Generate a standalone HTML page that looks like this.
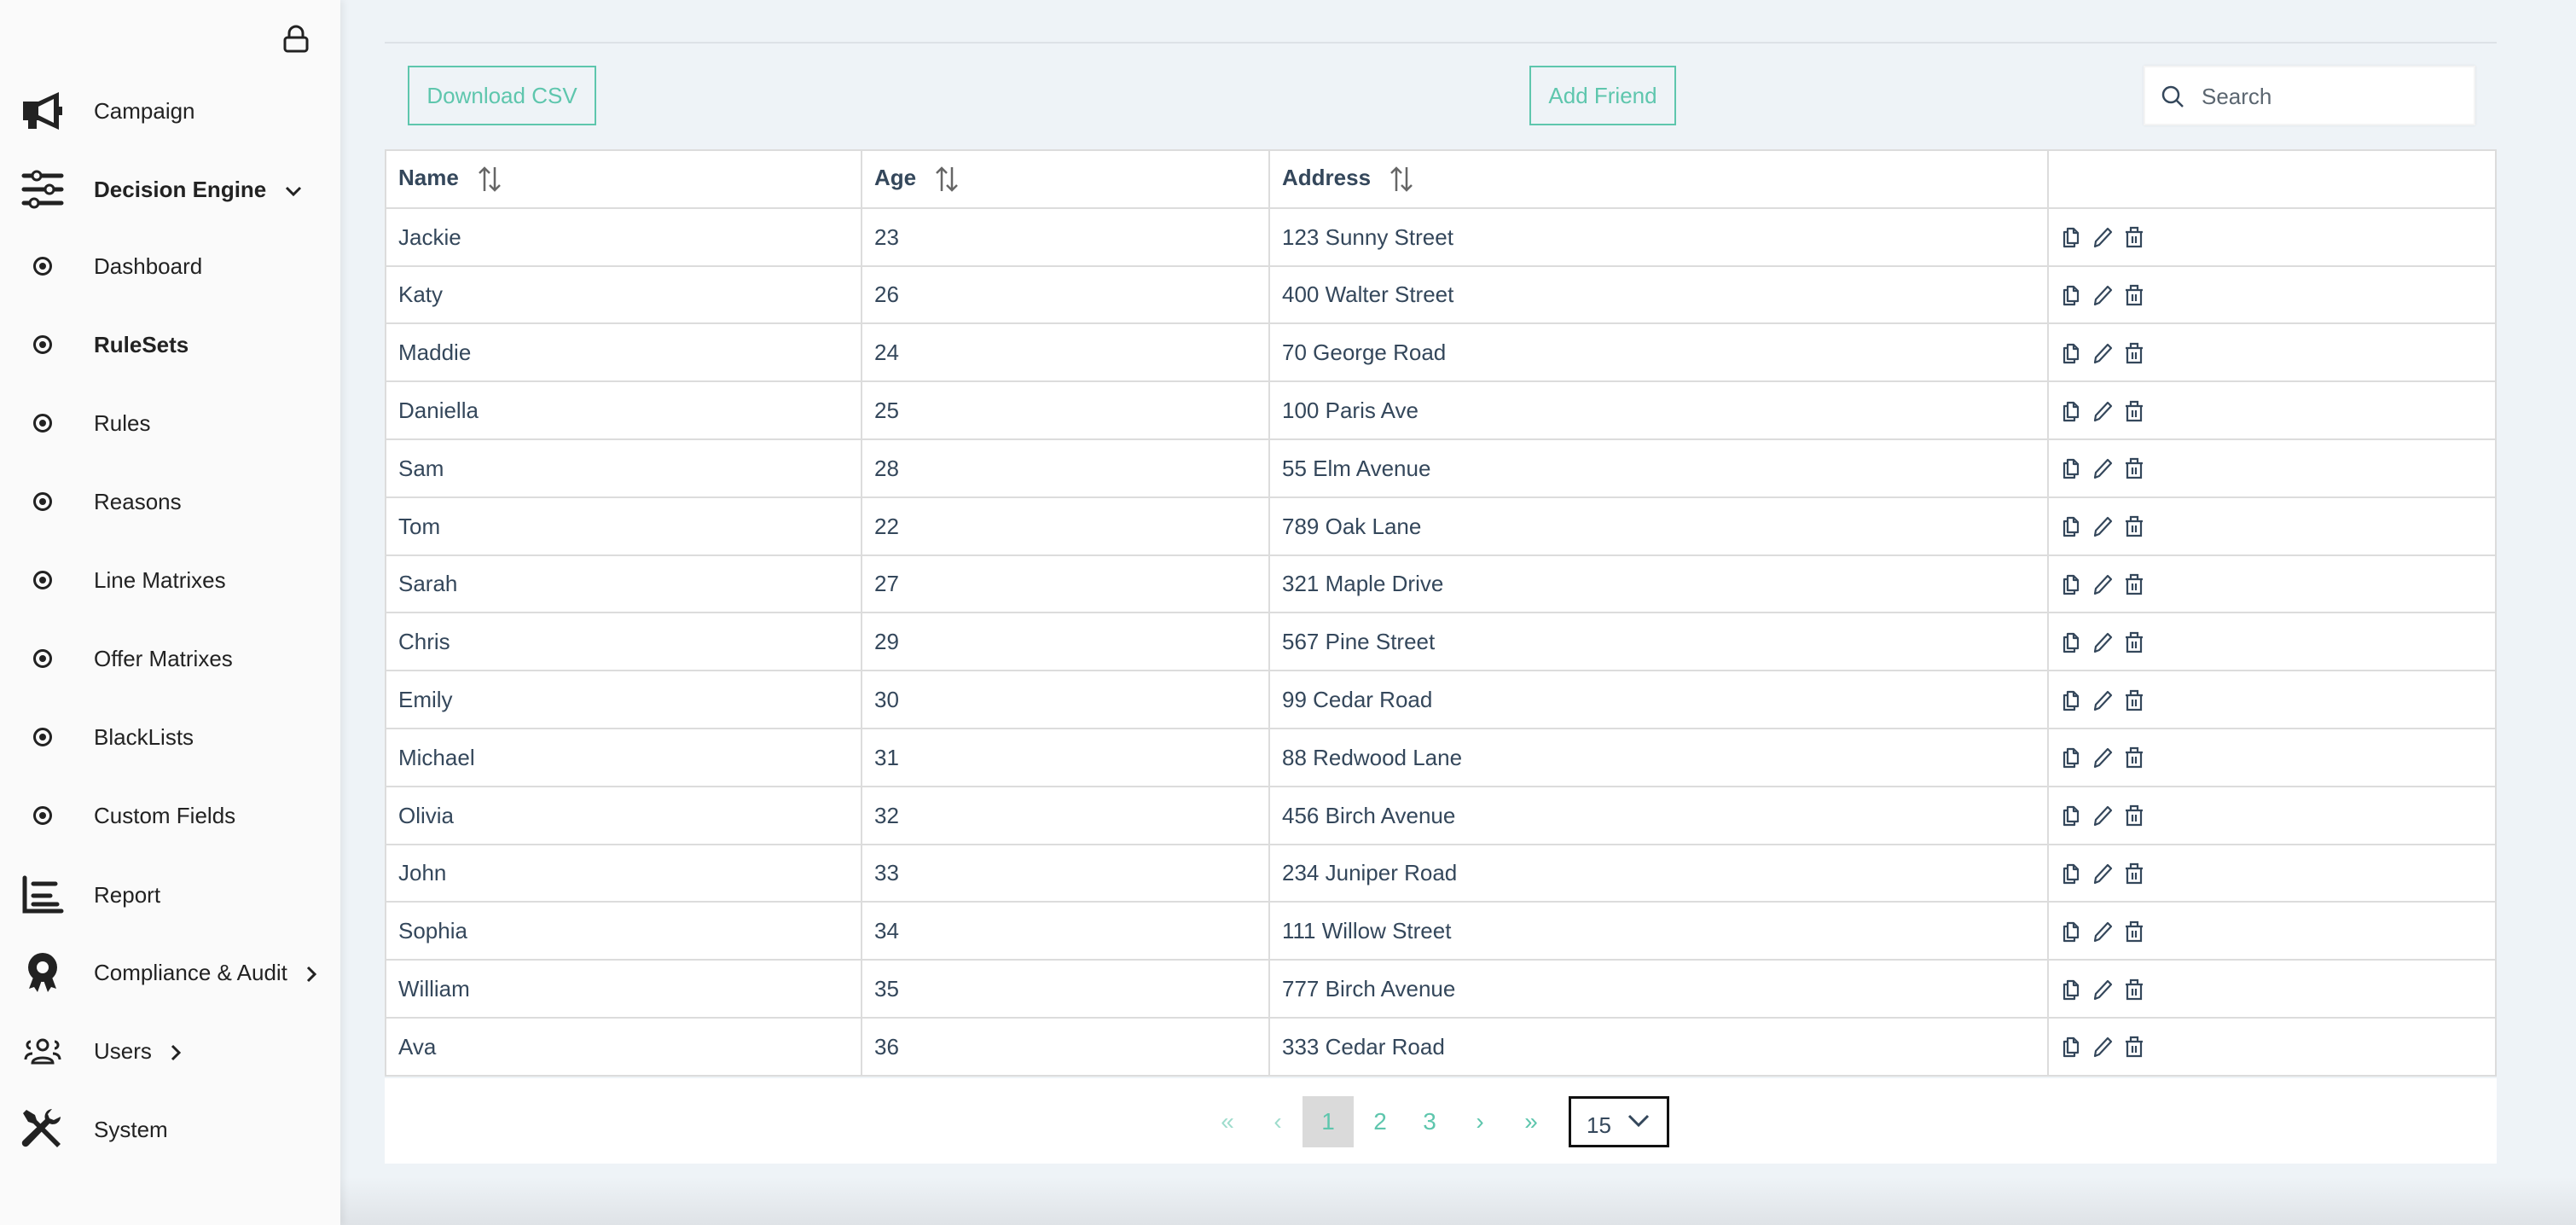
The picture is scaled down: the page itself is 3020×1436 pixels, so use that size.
<!DOCTYPE html>
<html><head><meta charset="utf-8"><style>
*{box-sizing:border-box;margin:0;padding:0}
body{width:3020px;height:1436px;overflow:hidden;font-family:"Liberation Sans",sans-serif;background:linear-gradient(#eef3f7 0,#eef3f7 1380px,#dfe3e7 1436px);position:relative}
.side{position:absolute;left:0;top:0;width:399px;height:1436px;background:#fafafa;box-shadow:4px 0 8px rgba(0,0,0,.06)}
.mi{position:absolute;left:0;height:60px;display:flex;align-items:center;font-size:26px;color:#222}
.mi .ic{position:absolute;left:22px;width:56px;height:56px;display:flex;align-items:center;justify-content:center}
.mi .tx{position:absolute;left:110px;white-space:nowrap}
.dot{width:22px;height:22px;border:3px solid #222;border-radius:50%;position:relative}
.dot:after{content:"";position:absolute;left:4px;top:4px;width:8px;height:8px;border-radius:50%;background:#222}
.topline{position:absolute;left:451px;top:49px;width:2476px;height:2px;background:#dde2e7}
.btn{position:absolute;top:77px;height:70px;border:2px solid #5ec6ad;color:#5ec6ad;font-size:26px;display:flex;align-items:center;justify-content:center}
.search{position:absolute;left:2513px;top:77px;width:389px;height:70px;background:#fff;border:2px solid #f4f4f4;box-shadow:0 0 3px rgba(0,0,0,.08)}
.search span{position:absolute;left:66px;top:19px;font-size:26px;color:#5b6670}
table{position:absolute;left:451px;top:175px;width:2476px;border-collapse:collapse;background:#fff;table-layout:fixed}
td,th{border:2px solid #dcdcdc;height:67.8px;padding:0 0 0 14px;font-size:26px;color:#34475b;text-align:left;font-weight:normal;line-height:1}
th{font-weight:bold}
.sort{display:inline-block;margin-left:22px;vertical-align:middle}
.acts svg{vertical-align:middle;margin-right:12px}
.pag{position:absolute;left:451px;top:1264px;width:2476px;height:100px;background:#fff}
.pg{position:absolute;top:21px;height:60px;width:60px;display:flex;align-items:center;justify-content:center;font-size:28px;color:#5ec6ad}
.sel{position:absolute;left:1388px;top:21px;width:118px;height:60px;border:3px solid #111;font-size:26px;color:#34475b}
</style></head><body>
<div class="side">
<svg style="position:absolute;left:332px;top:29px" width="30" height="33" viewBox="0 0 30 33"><path d="M7 15V10a8 8 0 0 1 16 0v5" fill="none" stroke="#222" stroke-width="3"/><rect x="2" y="15" width="26" height="16" rx="3" fill="none" stroke="#222" stroke-width="3"/></svg>

<div class="mi" style="top:100px"><div class="ic"><svg width="50" height="50" viewBox="0 0 50 50"><path d="M2 14h18L44 3v44L20 36h-2v10H8V36H2z" fill="#222"/><path d="M20 20l18-9v28L20 30z" fill="#fafafa"/><rect x="44" y="20" width="4" height="10" fill="#222"/></svg></div><div class="tx">Campaign</div></div>
<div class="mi" style="top:192px"><div class="ic"><svg width="50" height="46" viewBox="0 0 50 46"><g stroke="#222" stroke-width="5" stroke-linecap="round"><path d="M3 7h44M3 23h44M3 39h44"/></g><g fill="#fafafa" stroke="#222" stroke-width="3"><circle cx="18" cy="7" r="5"/><circle cx="33" cy="23" r="5"/><circle cx="15" cy="39" r="5"/></g></svg></div><div class="tx" style="font-weight:bold">Decision Engine <svg style="margin-left:14px;vertical-align:middle" width="20" height="14" viewBox="0 0 20 14"><path d="M2 3l8 8 8-8" fill="none" stroke="#222" stroke-width="3"/></svg></div></div>
<div class="mi" style="top:282px"><div class="ic"><div class="dot"></div></div><div class="tx">Dashboard</div></div>
<div class="mi" style="top:374px"><div class="ic"><div class="dot"></div></div><div class="tx" style="font-weight:bold">RuleSets</div></div>
<div class="mi" style="top:466px"><div class="ic"><div class="dot"></div></div><div class="tx">Rules</div></div>
<div class="mi" style="top:558px"><div class="ic"><div class="dot"></div></div><div class="tx">Reasons</div></div>
<div class="mi" style="top:650px"><div class="ic"><div class="dot"></div></div><div class="tx">Line Matrixes</div></div>
<div class="mi" style="top:742px"><div class="ic"><div class="dot"></div></div><div class="tx">Offer Matrixes</div></div>
<div class="mi" style="top:834px"><div class="ic"><div class="dot"></div></div><div class="tx">BlackLists</div></div>
<div class="mi" style="top:926px"><div class="ic"><div class="dot"></div></div><div class="tx">Custom Fields</div></div>
<div class="mi" style="top:1019px"><div class="ic"><svg width="50" height="46" viewBox="0 0 50 46"><g stroke="#222" stroke-width="5" stroke-linecap="round" fill="none"><path d="M4 3v39h43M14 10h26M14 24h20M14 34h28"/></g></svg></div><div class="tx">Report</div></div>
<div class="mi" style="top:1110px"><div class="ic"><svg width="40" height="50" viewBox="0 0 40 50"><path d="M10 28L4 44l6-2 4 6 5-14zM30 28l6 16-6-2-4 6-5-14z" fill="#222"/><circle cx="20" cy="19" r="17" fill="#222"/><circle cx="20" cy="19" r="7" fill="#fafafa"/></svg></div><div class="tx">Compliance &amp; Audit <svg style="margin-left:14px;vertical-align:middle" width="14" height="20" viewBox="0 0 14 20"><path d="M3 2l8 8-8 8" fill="none" stroke="#222" stroke-width="3"/></svg></div></div>
<div class="mi" style="top:1202px"><div class="ic"><svg width="44" height="32" viewBox="0 0 44 32"><g fill="none" stroke="#222" stroke-width="3"><circle cx="22" cy="9" r="6"/><path d="M10 30c0-8 24-8 24 0zM8 5a4 4 0 0 0 0 8M36 5a4 4 0 0 1 0 8M2 26c0-5 4-7 8-7M42 26c0-5-4-7-8-7"/></g></svg></div><div class="tx">Users <svg style="margin-left:14px;vertical-align:middle" width="14" height="20" viewBox="0 0 14 20"><path d="M3 2l8 8-8 8" fill="none" stroke="#222" stroke-width="3"/></svg></div></div>
<div class="mi" style="top:1294px"><div class="ic"><svg width="50" height="50" viewBox="0 0 50 50"><path d="M6 2l10 6 2 6 28 28-4 4-28-28-6-2-6-10z" fill="#222"/><path d="M46 10a9 9 0 0 1-13 8L8 44a4 4 0 0 1-6-6l26-25a9 9 0 0 1 8-12l-5 6 2 5 5 2z" fill="#222"/></svg></div><div class="tx">System</div></div>
</div>

<div class="topline"></div>
<div class="btn" style="left:478px;width:221px">Download CSV</div>
<div class="btn" style="left:1793px;width:172px">Add Friend</div>
<div class="search"><svg style="position:absolute;left:18px;top:20px" width="30" height="30" viewBox="0 0 30 30"><circle cx="12" cy="12" r="9" fill="none" stroke="#34475b" stroke-width="2.5"/><path d="M19 19l7 7" stroke="#34475b" stroke-width="2.5"/></svg><span>Search</span></div>

<table>
<colgroup><col style="width:558px"><col style="width:478px"><col style="width:913px"><col></colgroup>
<tr><th>Name<svg class="sort" width="28" height="32" viewBox="0 0 28 32"><g fill="none" stroke="#666" stroke-width="2.5"><path d="M8 30V3M2 9l6-6 6 6M20 2v27M14 23l6 6 6-6"/></g></svg></th><th>Age<svg class="sort" width="28" height="32" viewBox="0 0 28 32"><g fill="none" stroke="#666" stroke-width="2.5"><path d="M8 30V3M2 9l6-6 6 6M20 2v27M14 23l6 6 6-6"/></g></svg></th><th>Address<svg class="sort" width="28" height="32" viewBox="0 0 28 32"><g fill="none" stroke="#666" stroke-width="2.5"><path d="M8 30V3M2 9l6-6 6 6M20 2v27M14 23l6 6 6-6"/></g></svg></th><th></th></tr>
<tr><td>Jackie</td><td>23</td><td>123 Sunny Street</td><td class="acts">A</td></tr>
<tr><td>Katy</td><td>26</td><td>400 Walter Street</td><td class="acts">A</td></tr>
<tr><td>Maddie</td><td>24</td><td>70 George Road</td><td class="acts">A</td></tr>
<tr><td>Daniella</td><td>25</td><td>100 Paris Ave</td><td class="acts">A</td></tr>
<tr><td>Sam</td><td>28</td><td>55 Elm Avenue</td><td class="acts">A</td></tr>
<tr><td>Tom</td><td>22</td><td>789 Oak Lane</td><td class="acts">A</td></tr>
<tr><td>Sarah</td><td>27</td><td>321 Maple Drive</td><td class="acts">A</td></tr>
<tr><td>Chris</td><td>29</td><td>567 Pine Street</td><td class="acts">A</td></tr>
<tr><td>Emily</td><td>30</td><td>99 Cedar Road</td><td class="acts">A</td></tr>
<tr><td>Michael</td><td>31</td><td>88 Redwood Lane</td><td class="acts">A</td></tr>
<tr><td>Olivia</td><td>32</td><td>456 Birch Avenue</td><td class="acts">A</td></tr>
<tr><td>John</td><td>33</td><td>234 Juniper Road</td><td class="acts">A</td></tr>
<tr><td>Sophia</td><td>34</td><td>111 Willow Street</td><td class="acts">A</td></tr>
<tr><td>William</td><td>35</td><td>777 Birch Avenue</td><td class="acts">A</td></tr>
<tr><td>Ava</td><td>36</td><td>333 Cedar Road</td><td class="acts">A</td></tr>
</table>

<div class="pag">
<div class="pg" style="left:958px;color:#9edccc">«</div>
<div class="pg" style="left:1017px;color:#9edccc">‹</div>
<div class="pg" style="left:1076px;background:#dadada">1</div>
<div class="pg" style="left:1137px">2</div>
<div class="pg" style="left:1195px">3</div>
<div class="pg" style="left:1254px">›</div>
<div class="pg" style="left:1314px">»</div>
<div class="sel"><span style="position:absolute;left:18px;top:16px">15</span><svg style="position:absolute;left:66px;top:18px" width="26" height="16" viewBox="0 0 26 16"><path d="M2 2l11 11L24 2" fill="none" stroke="#34475b" stroke-width="3"/></svg></div>
</div>

<script>
var ic='<svg width="24" height="28" viewBox="0 0 24 28"><g fill="none" stroke="#34475b" stroke-width="2.2" stroke-linejoin="round"><path d="M8 4h7l5 5v12H8z"/><path d="M15 4v5h5"/><path d="M8 8H4v17h12v-4"/></g></svg><svg width="26" height="28" viewBox="0 0 26 28"><g fill="none" stroke="#34475b" stroke-width="2.2" stroke-linejoin="round"><path d="M4 25l1-6L19 4l4 4L9 23z"/></g></svg><svg width="24" height="28" viewBox="0 0 24 28"><g fill="none" stroke="#34475b" stroke-width="2.2"><path d="M2 8h20M8 8V3h8v5M4 8v17h16V8M10 13v8M14 13v8"/></g></svg>';
document.querySelectorAll('.acts').forEach(function(e){e.innerHTML=ic;});
</script>
</body></html>
